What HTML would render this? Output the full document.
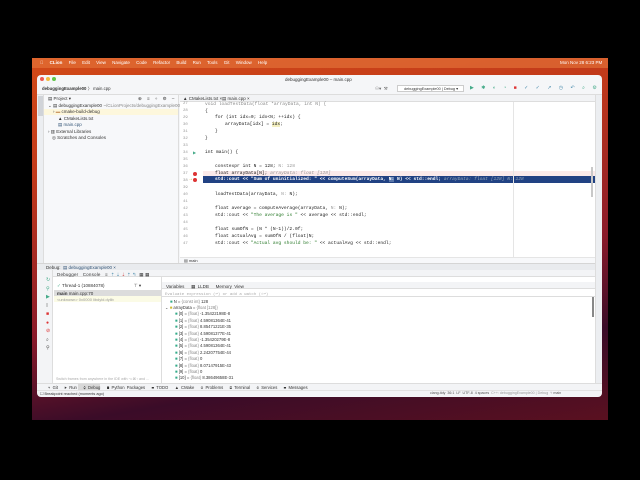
<!DOCTYPE html>
<html><head><meta charset="utf-8"><style>
*{margin:0;padding:0;box-sizing:border-box}
body{width:640px;height:480px;background:#000;position:relative;overflow:hidden;font-family:"Liberation Sans",sans-serif;font-size:4.5px;color:#333}
.a{position:absolute;white-space:nowrap}
.m{font-family:"Liberation Mono",monospace;font-size:4.6px;color:#222}
.ln{font-family:"Liberation Mono",monospace;font-size:4px;color:#999}
</style></head><body>
<div class="a" style="left:32px;top:58px;width:576px;height:362px;background:linear-gradient(170deg,#d24a18 0%,#c23a1a 25%,#8a1a2a 60%,#3a0c28 80%,#5a1020 100%)"></div>
<div class="a" style="left:32px;top:58px;width:576px;height:10px;background:rgba(230,120,60,.6)"></div>
<div class="a" style="left:40px;top:60px;color:#fff;font-size:4.5px;word-spacing:5px">&#63743; <b>CLion</b> File Edit View Navigate Code Refactor Build Run Tools Git Window Help</div>
<div class="a" style="left:560px;top:60px;color:#fff;font-size:4.5px">Mon Nov 28 6:23 PM</div>
<!-- window -->
<div class="a" style="left:37px;top:75px;width:565px;height:322px;background:#f5f6f8;border-radius:4px"></div>
<div class="a" style="left:40px;top:77px;width:4px;height:4px;border-radius:50%;background:#ee5b52"></div>
<div class="a" style="left:46px;top:77px;width:4px;height:4px;border-radius:50%;background:#f3bd3f"></div>
<div class="a" style="left:52px;top:77px;width:4px;height:4px;border-radius:50%;background:#5fc648"></div>
<div class="a" style="left:285px;top:77px;font-size:4.5px">debuggingExample00 – main.cpp</div>
<div class="a" style="left:42px;top:86px;font-size:4.3px"><b>debuggingExample00</b> 〉 main.cpp</div>
<div class="a" style="left:375px;top:86px;font-size:4.5px;color:#666">⚇▾ &nbsp;⚒</div>
<div class="a" style="left:397px;top:85px;width:67px;height:7px;border:1px solid #ccc;background:#fff;font-size:3.8px;padding-left:6px">debuggingExample00 | Debug ▾</div>
<div class="a" style="left:470px;top:85px;font-size:5px;color:#4a8;letter-spacing:3px">▶ ✱ ◐ ◔ <span style="color:#d33">■</span> <span style="color:#48a">✓ ✓ ↗ ◷ ↶</span>  ⌕ ⚙</div>
<div class="a" style="left:37px;top:94px;width:565px;height:1px;background:#ddd"></div>
<!-- left strip -->
<div class="a" style="left:37px;top:95px;width:7px;height:168px;background:#eceef1;border-right:1px solid #ddd"></div>
<div class="a" style="left:38px;top:96px;width:5px;height:20px;background:#d0d3d8"></div>
<!-- project panel -->
<div class="a" style="left:44px;top:95px;width:135px;height:168px;background:#f7f8fa;border-right:1px solid #ddd"></div>
<div class="a" style="left:48px;top:96px">▤ Project ▾</div>
<div class="a" style="left:138px;top:96px;letter-spacing:2px">⊕ ≡ ÷ ⚙ –</div>
<div class="a" style="left:48px;top:102.5px">⌄ ▤ debuggingExample00 <span style="color:#888">~/CLionProjects/debuggingExample00</span></div>
<div class="a" style="left:44px;top:108.5px;width:134px;height:6px;background:#fdf7dc"></div>
<div class="a" style="left:53px;top:109px">› <span style="color:#c96">▬</span> cmake-build-debug</div>
<div class="a" style="left:58px;top:115.5px">▲ CMakeLists.txt</div>
<div class="a" style="left:58px;top:122px;color:#357">▤ main.cpp</div>
<div class="a" style="left:48px;top:128.5px">› ▥ External Libraries</div>
<div class="a" style="left:52px;top:135px">◎ Scratches and Consoles</div>
<!-- tabs -->
<div class="a" style="left:180px;top:95px;width:415px;height:7px;background:#f2f3f5;border-bottom:1px solid #ddd"></div>
<div class="a" style="left:183px;top:96px">▲ CMakeLists.txt ×</div>
<div class="a" style="left:222px;top:96px;border-bottom:1px solid #4a7de0;padding-bottom:0">▤ main.cpp ×</div>
<!-- editor -->
<div class="a" style="left:180px;top:102px;width:415px;height:155px;background:#fff"></div>
<div class="a" style="left:203px;top:171px;width:392px;height:5.5px;background:#fbeaea"></div>
<div class="a" style="left:203px;top:176px;width:392px;height:7px;background:#214283"></div>
<div class="a" style="left:513px;top:102px;width:1px;height:155px;background:#e5e5e5"></div>
<div class="a" style="left:180px;top:102px;width:23px;height:155px">
<div class="ln a" style="left:3px;top:0">27</div>
<div class="ln a" style="left:3px;top:7px">28</div><div class="ln a" style="left:3px;top:14px">29</div>
<div class="ln a" style="left:3px;top:21px">30</div><div class="ln a" style="left:3px;top:28px">31</div>
<div class="ln a" style="left:3px;top:35px">32</div><div class="ln a" style="left:3px;top:42px">33</div>
<div class="ln a" style="left:3px;top:49px">34</div><div class="ln a" style="left:3px;top:56px">35</div>
<div class="ln a" style="left:3px;top:63px">36</div><div class="ln a" style="left:3px;top:70px">37</div>
<div class="ln a" style="left:3px;top:77px">38</div><div class="ln a" style="left:3px;top:84px">39</div>
<div class="ln a" style="left:3px;top:91px">40</div><div class="ln a" style="left:3px;top:98px">41</div>
<div class="ln a" style="left:3px;top:105px">42</div><div class="ln a" style="left:3px;top:112px">43</div>
<div class="ln a" style="left:3px;top:119px">44</div><div class="ln a" style="left:3px;top:126px">45</div>
<div class="ln a" style="left:3px;top:133px">46</div><div class="ln a" style="left:3px;top:140px">47</div>
<div class="a" style="left:13px;top:70px;width:4px;height:4px;border-radius:50%;background:#d33"></div>
<div class="a" style="left:13px;top:76px;width:4px;height:4px;border-radius:50%;background:#d33"></div>
<div class="a" style="left:8px;top:74px;color:#c90;font-size:5px">→</div>
<div class="a" style="left:13px;top:48px;color:#4a8;font-size:4px">▶</div>
</div>
<div class="a m" style="left:205px;top:102px;color:#888">void loadTestData(float *arrayData, int N) {</div>
<div class="a m" style="left:205px;top:109px">{</div>
<div class="a m" style="left:215px;top:115px">for (int idx=0; idx&lt;N; ++idx) {</div>
<div class="a m" style="left:225px;top:122px">arrayData[idx] = <span style="background:#f3efc0">idx</span>;</div>
<div class="a m" style="left:215px;top:129px">}</div>
<div class="a m" style="left:205px;top:136px">}</div>
<div class="a m" style="left:205px;top:150px">int main() {</div>
<div class="a m" style="left:215px;top:164px">constexpr int N = 128;  <span style="color:#999">N: 128</span></div>
<div class="a m" style="left:215px;top:171px">float arrayData[N];  <span style="color:#999;font-style:italic">arrayData: float [128]</span></div>
<div class="a m" style="left:215px;top:177px;color:#fff;font-weight:bold">std::cout &lt;&lt; "Sum of uninitialized: " &lt;&lt; computeSum(arrayData, <span style="background:#5a77aa">N:</span> N) &lt;&lt; std::endl;  <span style="color:#9ab;font-weight:normal;font-style:italic">arrayData: float [128]  N: 128</span></div>
<div class="a m" style="left:215px;top:192px">loadTestData(arrayData, <span style="color:#999">N:</span> N);</div>
<div class="a m" style="left:215px;top:206px">float average = computeAverage(arrayData, <span style="color:#999">N:</span> N);</div>
<div class="a m" style="left:215px;top:213px">std::cout &lt;&lt; <span style="color:#2a7a2a">"The average is "</span> &lt;&lt; average &lt;&lt; std::endl;</div>
<div class="a m" style="left:215px;top:227px">float sumOfN = (N * (N-1))/2.0f;</div>
<div class="a m" style="left:215px;top:234px">float actualAvg = sumOfN / (float)N;</div>
<div class="a m" style="left:215px;top:241px">std::cout &lt;&lt; <span style="color:#2a7a2a">"Actual avg should be: "</span> &lt;&lt; actualAvg &lt;&lt; std::endl;</div>
<div class="a" style="left:180px;top:257px;width:415px;height:6px;background:#f7f8fa;border-top:1px solid #e5e5e5"></div>
<div class="a" style="left:184px;top:257.5px;font-size:4px">▤ main</div>
<div class="a" style="left:591px;top:167px;width:2px;height:30px;background:#c8c8c8"></div>
<!-- right strip -->
<div class="a" style="left:595px;top:95px;width:7px;height:290px;background:#eceef1;border-left:1px solid #ddd"></div>
<!-- debug panel -->
<div class="a" style="left:37px;top:263px;width:558px;height:7px;background:#e9ebee;border-top:1px solid #d5d5d5"></div>
<div class="a" style="left:46px;top:264.5px">Debug: &nbsp;<span style="color:#357">▤ debuggingExample00 ×</span></div>
<div class="a" style="left:37px;top:270px;width:558px;height:7px;background:#f3f4f6;border-bottom:1px solid #ddd"></div>
<div class="a" style="left:57px;top:271.5px;letter-spacing:.2px">Debugger &nbsp; Console &nbsp; ≡ &nbsp;<span style="color:#48a">⇡ ⇣ <span style="color:#c44">⇣</span> ⇡ ↰</span> &nbsp;▦ ▦</div>
<div class="a" style="left:37px;top:270px;width:16px;height:116px;background:#f3f4f6;border-right:1px solid #ddd"></div>
<div class="a" style="left:46px;top:276px;font-size:5px;line-height:8.5px;color:#4a8">↻<br>⚲<br>▶<br><span style="color:#999">‖</span><br><span style="color:#d33">■</span><br><span style="color:#d33">●</span><br><span style="color:#d33">⊘</span><br><span style="color:#555">⌕</span><br><span style="color:#555">⚲</span></div>
<div class="a" style="left:53px;top:277px;width:109px;height:109px;background:#fff;border-right:1px solid #ddd"></div>
<div class="a" style="left:57px;top:283px"><span style="color:#4a8">✓</span> Thread-1 (10884078) <span style="margin-left:28px">⊤ ▾</span></div>
<div class="a" style="left:54px;top:290px;width:107px;height:6px;background:#dcdcdc"></div>
<div class="a" style="left:57px;top:290.5px"><b>main</b> main.cpp:70</div>
<div class="a" style="left:54px;top:296px;width:107px;height:6px;background:#fbfbe6"></div>
<div class="a" style="left:57px;top:296.5px;color:#999;font-size:4px">&lt;unknown&gt; 0x0000 libdyld.dylib</div>
<div class="a" style="left:56px;top:377px;color:#aaa;font-size:3.6px">Switch frames from anywhere in the IDE with ⌥⌘↑ and ...</div>
<div class="a" style="left:162px;top:277px;width:433px;height:109px;background:#fff"></div>
<div class="a" style="left:162px;top:282px;width:433px;height:7px;background:#f3f4f6;border-bottom:1px solid #ddd"></div>
<div class="a" style="left:166px;top:283.5px;word-spacing:1px">Variables &nbsp; ▦ LLDB &nbsp; Memory View</div>
<div class="a" style="left:162px;top:290px;width:433px;height:7px;border-bottom:1px solid #ddd"></div>
<div class="a m" style="left:165px;top:291px;color:#aaa;font-size:4px">Evaluate expression (↩) or add a watch (⇧↩)</div>
<div class="a" style="left:592px;top:297px;width:2px;height:20px;background:#888"></div>
<div class="a" style="left:170px;top:298.5px;font-size:4.2px;line-height:6.4px"><span style="color:#3a8">■</span> N = <span style="color:#888">{const int}</span> 128<br><span style="margin-left:-5px">⌄ </span><span style="color:#cb3">■</span> arrayData = <span style="color:#888">{float [128]}</span></div>
<div class="a" style="left:175px;top:311.4px;font-size:4.2px;line-height:6.4px">
<span style="color:#3a8">■</span> [0] = <span style="color:#888">{float}</span> -1.35422198E-8<br>
<span style="color:#3a8">■</span> [1] = <span style="color:#888">{float}</span> 4.59081364E-41<br>
<span style="color:#3a8">■</span> [2] = <span style="color:#888">{float}</span> 8.85471221E-35<br>
<span style="color:#3a8">■</span> [3] = <span style="color:#888">{float}</span> 4.59081377E-41<br>
<span style="color:#3a8">■</span> [4] = <span style="color:#888">{float}</span> -1.35420279E-8<br>
<span style="color:#3a8">■</span> [5] = <span style="color:#888">{float}</span> 4.59081364E-41<br>
<span style="color:#3a8">■</span> [6] = <span style="color:#888">{float}</span> 2.24207754E-44<br>
<span style="color:#3a8">■</span> [7] = <span style="color:#888">{float}</span> 0<br>
<span style="color:#3a8">■</span> [8] = <span style="color:#888">{float}</span> 8.07147915E-43<br>
<span style="color:#3a8">■</span> [9] = <span style="color:#888">{float}</span> 0<br>
<span style="color:#3a8">■</span> [10] = <span style="color:#888">{float}</span> 8.38649658E-31</div>
<!-- bottom tabs -->
<div class="a" style="left:37px;top:383px;width:565px;height:7px;background:#f3f4f6;border-top:1px solid #ddd"></div>
<div class="a" style="left:78px;top:383.5px;width:22px;height:6px;background:#d8d8d8"></div>
<div class="a" style="left:48px;top:384.5px;font-size:4.2px;word-spacing:1px">⑂ Git &nbsp; ▶ Run &nbsp; ⚙ Debug &nbsp; ▤ Python Packages &nbsp; ☰ TODO &nbsp; ▲ CMake &nbsp; ⊘ Problems &nbsp; ▣ Terminal &nbsp; ◉ Services &nbsp; ☰ Messages</div>
<div class="a" style="left:37px;top:390px;width:565px;height:6px;background:#f3f4f6;border-top:1px solid #e2e2e2;border-radius:0 0 4px 4px"></div>
<div class="a" style="left:40px;top:390.5px;font-size:3.8px">☐ Breakpoint reached (moments ago)</div>
<div class="a" style="left:430px;top:390.5px;font-size:3.6px;color:#555">clang-tidy &nbsp;36:1 &nbsp;LF &nbsp;UTF-8 &nbsp;4 spaces &nbsp;<span style="color:#999">C++: debuggingExample00 | Debug</span> &nbsp;⑂ main</div>
</body></html>
